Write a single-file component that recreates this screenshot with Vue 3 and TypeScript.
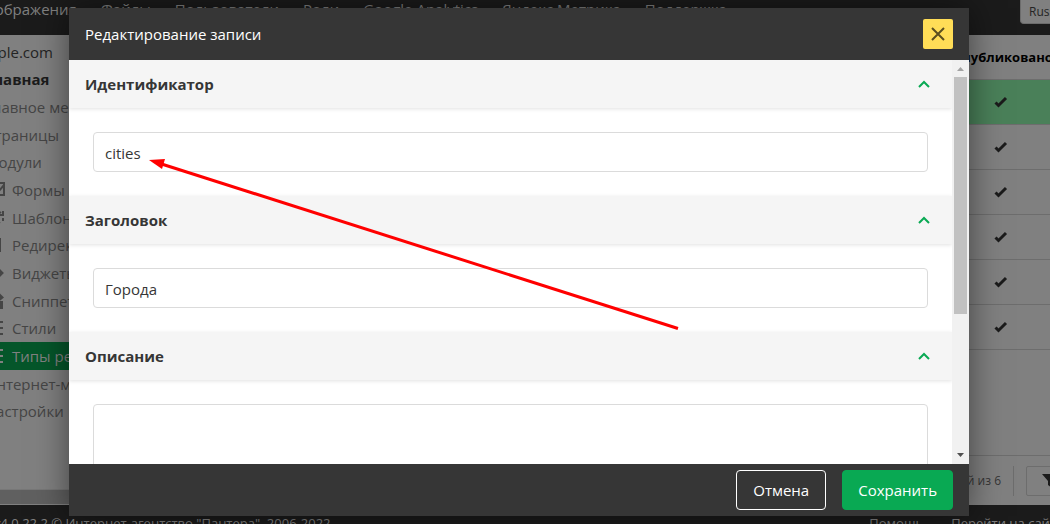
<script setup lang="ts">
import { ref } from 'vue'

type IconName = 'form' | 'refresh' | 'file' | 'arrow' | 'snippet' | 'list'

interface SideItem {
  label: string
  icon?: IconName
  bold?: boolean
  active?: boolean
  root?: boolean
}

const navItems: string[] = [
  'Изображения',
  'Файлы',
  'Пользователи',
  'Роли',
  'Google Analytics',
  'Яндекс Метрика',
  'Поддержка',
]

const sideItems: SideItem[] = [
  { label: 'example.com', root: true },
  { label: 'Главная', bold: true },
  { label: 'Главное меню' },
  { label: 'Страницы' },
  { label: 'Модули' },
  { label: 'Формы', icon: 'form' },
  { label: 'Шаблоны', icon: 'refresh' },
  { label: 'Редиректы', icon: 'file' },
  { label: 'Виджеты', icon: 'arrow' },
  { label: 'Сниппеты', icon: 'snippet' },
  { label: 'Стили', icon: 'list' },
  { label: 'Типы ресурсов', icon: 'list', active: true },
  { label: 'Интернет-магазин' },
  { label: 'Настройки' },
]

const icons: Record<IconName, string> = {
  form: 'M2 1h13v12H2z M5 3l5 6 5-6 M4 15.500h7',
  refresh: 'M2 7a6 5 0 0 1 10-4 M14 1v4h-4 M14 8v3 M11 12l-3 2',
  file: 'M2 2h9v12H2z',
  arrow: 'M2 8h9 M11 5.500l2.500 2.500-2.500 2.500z',
  snippet: 'M5 6l6-4 M11 2l2.500 2.500-2.500 2z M11 9h2v6h-2z',
  list: 'M2 2h4 M2 8h4 M2 14h4 M9 2h5 M9 8h5 M9 14h5',
}

const rows = [1, 2, 3, 4, 5, 6]

const identifier = ref('cities')
const title = ref('Города')
const description = ref('')
const language = ref('Russian')
</script>

<template>
  <div class="page">
    <header class="topbar">
      <nav class="topnav">
        <a v-for="item in navItems" :key="item" href="#">{{ item }}</a>
      </nav>
      <select v-model="language" class="language" aria-label="Язык">
        <option>Russian</option>
      </select>
    </header>

    <div class="workspace">
      <aside class="sidebar">
        <nav class="tree">
          <a
            v-for="item in sideItems"
            :key="item.label"
            href="#"
            :class="{ bold: item.bold, active: item.active, nested: item.icon, root: item.root }"
          >
            <svg v-if="item.icon" viewBox="0 0 16 16" aria-hidden="true">
              <path :d="icons[item.icon]" />
            </svg>
            <span>{{ item.label }}</span>
          </a>
        </nav>
        <div class="tree-scroll"></div>
      </aside>

      <main class="records">
        <table>
          <thead>
            <tr>
              <th></th>
              <th class="state">Опубликовано</th>
            </tr>
          </thead>
          <tbody>
            <tr v-for="row in rows" :key="row" :class="{ selected: row === 1 }">
              <td></td>
              <td class="state">
                <svg width="14" height="12" viewBox="0 0 14 12" aria-label="Да">
                  <path d="M1.500 6.500 4.500 9.500 12 2" />
                </svg>
              </td>
            </tr>
          </tbody>
        </table>
        <div class="pager">
          <span class="count">1-6 записей из 6</span>
          <button type="button" class="filter" aria-label="Фильтр">
            <svg width="16" height="16" viewBox="0 0 16 16" aria-hidden="true">
              <path d="M0 1h16L10 8v7l-4-3V8z" />
            </svg>
          </button>
        </div>
      </main>
    </div>

    <footer class="bottombar">
      <span>v4.0.22.2 © Интернет-агентство "Пантера", 2006-2022</span>
      <nav>
        <a href="#">Помощь</a>
        <a href="#">Перейти на сайт</a>
      </nav>
    </footer>

    <div class="overlay">
      <form class="modal" role="dialog" aria-labelledby="dialog-title" @submit.prevent>
        <div class="modal-head">
          <h1 id="dialog-title">Редактирование записи</h1>
          <button type="button" class="close" aria-label="Закрыть">
            <svg width="16" height="16" viewBox="0 0 16 16" aria-hidden="true">
              <path d="M2 2l12 12M14 2L2 14" />
            </svg>
          </button>
        </div>

        <div class="modal-body">
          <div class="fields">
            <section>
              <div class="section-head">
                <label for="identifier">Идентификатор</label>
                <svg class="chevron" viewBox="0 0 12 8" aria-hidden="true"><path d="M1 7l5-5 5 5" /></svg>
              </div>
              <div class="section-body">
                <input id="identifier" v-model="identifier" type="text" />
              </div>
            </section>
            <section>
              <div class="section-head">
                <label for="title">Заголовок</label>
                <svg class="chevron" viewBox="0 0 12 8" aria-hidden="true"><path d="M1 7l5-5 5 5" /></svg>
              </div>
              <div class="section-body">
                <input id="title" v-model="title" type="text" />
              </div>
            </section>
            <section>
              <div class="section-head">
                <label for="description">Описание</label>
                <svg class="chevron" viewBox="0 0 12 8" aria-hidden="true"><path d="M1 7l5-5 5 5" /></svg>
              </div>
              <div class="section-body">
                <textarea id="description" v-model="description"></textarea>
              </div>
            </section>
          </div>
          <div class="scrollbar" aria-hidden="true">
            <svg class="up" viewBox="0 0 17 17"><path d="M5 11h7L8.500 7z" /></svg>
            <div class="track"><div class="thumb"></div></div>
            <svg class="down" viewBox="0 0 17 17"><path d="M5 6h7L8.500 10z" /></svg>
          </div>
        </div>

        <div class="modal-foot">
          <button type="button" class="btn outline">Отмена</button>
          <button type="submit" class="btn primary">Сохранить</button>
        </div>
      </form>
    </div>

    <svg class="pointer" viewBox="0 0 1050 524" preserveAspectRatio="none" aria-hidden="true">
      <path class="shaft" d="M160 163.500L678 328.500" />
      <path class="tip" d="M149 160L165 159L162 169z" />
    </svg>
  </div>
</template>

<style>
body {
  margin: 0;
  overflow: hidden;
}
</style>

<style scoped>
* {
  box-sizing: border-box;
}

.page {
  display: flex;
  flex-direction: column;
  height: 100vh;
  overflow: hidden;
  background: #808080;
  color: #363636;
  font: 15px/24px "Open Sans", "Noto Sans", sans-serif;
}

a {
  color: inherit;
  text-decoration: none;
  white-space: nowrap;
}

button,
input,
textarea,
select {
  margin: 0;
  font: inherit;
}

.topbar {
  display: flex;
  flex: none;
  justify-content: space-between;
  height: 35px;
  background: #1b1b1b;
  color: #808080;
}

.topnav {
  display: flex;
  gap: 24px;
  margin-left: -24px;
  line-height: 18px;
}

.language {
  flex: none;
  width: 80px;
  height: 24px;
  margin-right: -50px;
  padding: 0 8px;
  appearance: none;
  border: 1px solid #6c6c6c;
  border-top: 0;
  border-radius: 0 0 4px 4px;
  background: #808080;
  color: #242424;
  font-size: 12px;
  line-height: 18px;
}

.workspace {
  display: flex;
  flex: 1;
  min-height: 0;
}

.sidebar {
  display: flex;
  flex: none;
  flex-direction: column;
  justify-content: space-between;
  width: 300px;
}

.tree {
  display: grid;
  grid-auto-rows: 1fr;
  height: 387px;
  margin-top: 3px;
  color: #454545;
}

.tree a {
  display: flex;
  align-items: center;
  gap: 7px;
}

.tree a:not(.nested) > span {
  margin-left: -15px;
}

.tree a.root > span {
  margin-left: -41px;
}

.tree .root {
  color: #242424;
}

.tree .bold {
  color: #1b1b1b;
  font-weight: 700;
}

.tree .active {
  background: #05562a;
  color: #808080;
}

.tree svg {
  flex: none;
  width: 16px;
  height: 16px;
  margin-left: -11px;
  fill: none;
  stroke: currentColor;
  stroke-width: 2;
}

.tree-scroll {
  height: 15px;
  margin-bottom: 1px;
  border-top: 1px solid #777777;
  background: #606060;
}

.records {
  display: flex;
  flex: 1;
  flex-direction: column;
  justify-content: space-between;
  min-width: 0;
}

table {
  width: 100%;
  border-collapse: collapse;
  table-layout: fixed;
}

th,
td {
  height: 45px;
  padding: 0;
  border-bottom: 1px solid #6d6d6d;
}

.state {
  width: 98px;
  text-align: center;
}

th {
  height: 44px;
  color: #000000;
  font-size: 13px;
  white-space: nowrap;
}

td svg {
  display: block;
  margin: 0 auto;
  fill: none;
  stroke: #1b1b1b;
  stroke-width: 3;
}

.selected {
  background: #4a8059;
}

.pager {
  display: flex;
  align-items: center;
  justify-content: flex-end;
  height: 50px;
  border-top: 1px solid #6d6d6d;
  font-size: 12px;
}

.count {
  padding-right: 12px;
  border-right: 1px solid #6d6d6d;
  line-height: 30px;
}

.filter {
  flex: none;
  width: 48px;
  height: 30px;
  margin: 0 -24px 0 12px;
  padding: 0 15px;
  border: 1px solid #6d6d6d;
  border-radius: 2px;
  background: #808080;
}

.filter svg {
  display: block;
  fill: #1b1b1b;
}

.bottombar {
  display: flex;
  flex: none;
  justify-content: space-between;
  height: 19px;
  padding-top: 6px;
  overflow: hidden;
  background: #1b1b1b;
  color: #808080;
  font-size: 13px;
  white-space: nowrap;
}

.bottombar > span {
  margin-left: -6px;
}

.bottombar nav {
  display: flex;
  gap: 28px;
  margin-right: -6px;
}

.overlay {
  position: absolute;
  inset: 0;
  display: flex;
  padding: 8px 81px 8px 69px;
  overflow: hidden;
}

.modal {
  display: flex;
  flex: 1;
  flex-direction: column;
  min-width: 0;
  background: #ffffff;
  box-shadow: 0 0 32px rgba(0, 0, 0, 0.5);
}

.modal-head,
.modal-foot {
  display: flex;
  flex: none;
  align-items: center;
  height: 52px;
  padding: 0 16px;
  background: #363636;
  color: #ffffff;
}

.modal-head {
  justify-content: space-between;
}

.modal-head h1 {
  margin: 0;
  font-size: 15px;
  font-weight: 400;
}

.close {
  display: grid;
  place-items: center;
  width: 30px;
  height: 30px;
  padding: 0;
  border: 0;
  border-radius: 2px;
  background: #ffdd57;
}

.close path {
  fill: none;
  stroke: #5a4e20;
  stroke-width: 2;
}

.modal-body {
  display: flex;
  flex: 1;
  min-height: 0;
}

.fields {
  flex: 1;
  min-width: 0;
  overflow: hidden;
}

.section-head {
  display: flex;
  align-items: center;
  justify-content: space-between;
  height: 48px;
  padding: 0 22px 0 16px;
  background: #f5f5f5;
  box-shadow: 0 1px 4px rgba(10, 10, 10, 0.12);
  font-weight: 700;
}

.chevron {
  width: 12px;
  height: 8px;
  fill: none;
  stroke: #09a953;
  stroke-width: 2;
}

.section-body {
  padding: 24px;
}

input,
textarea {
  display: block;
  width: 100%;
  height: 40px;
  padding: 2px 11px 0;
  border: 1px solid #dbdbdb;
  border-radius: 4px;
  outline: 0;
  background: #ffffff;
  color: #363636;
  resize: none;
}

textarea {
  height: 120px;
}

.scrollbar {
  display: flex;
  flex: none;
  flex-direction: column;
  width: 17px;
  background: #f1f1f1;
}

.scrollbar svg {
  flex: none;
  width: 17px;
  height: 17px;
}

.up {
  fill: #a3a3a3;
}

.down {
  fill: #505050;
}

.track {
  flex: 1;
  padding: 0 2px;
}

.thumb {
  height: 64%;
  background: #c1c1c1;
}

.modal-foot {
  justify-content: flex-end;
  gap: 16px;
}

.btn {
  min-width: 90px;
  height: 40px;
  padding: 0 15px;
  border: 1px solid #ffffff;
  border-radius: 4px;
  background: transparent;
  color: #ffffff;
}

.btn.primary {
  border-color: #09a953;
  background: #09a953;
}

.pointer {
  position: absolute;
  inset: 0;
  width: 100%;
  height: 100%;
  pointer-events: none;
}

.shaft {
  fill: none;
  stroke: #ff0000;
  stroke-width: 3;
}

.tip {
  fill: #ff0000;
}
</style>
